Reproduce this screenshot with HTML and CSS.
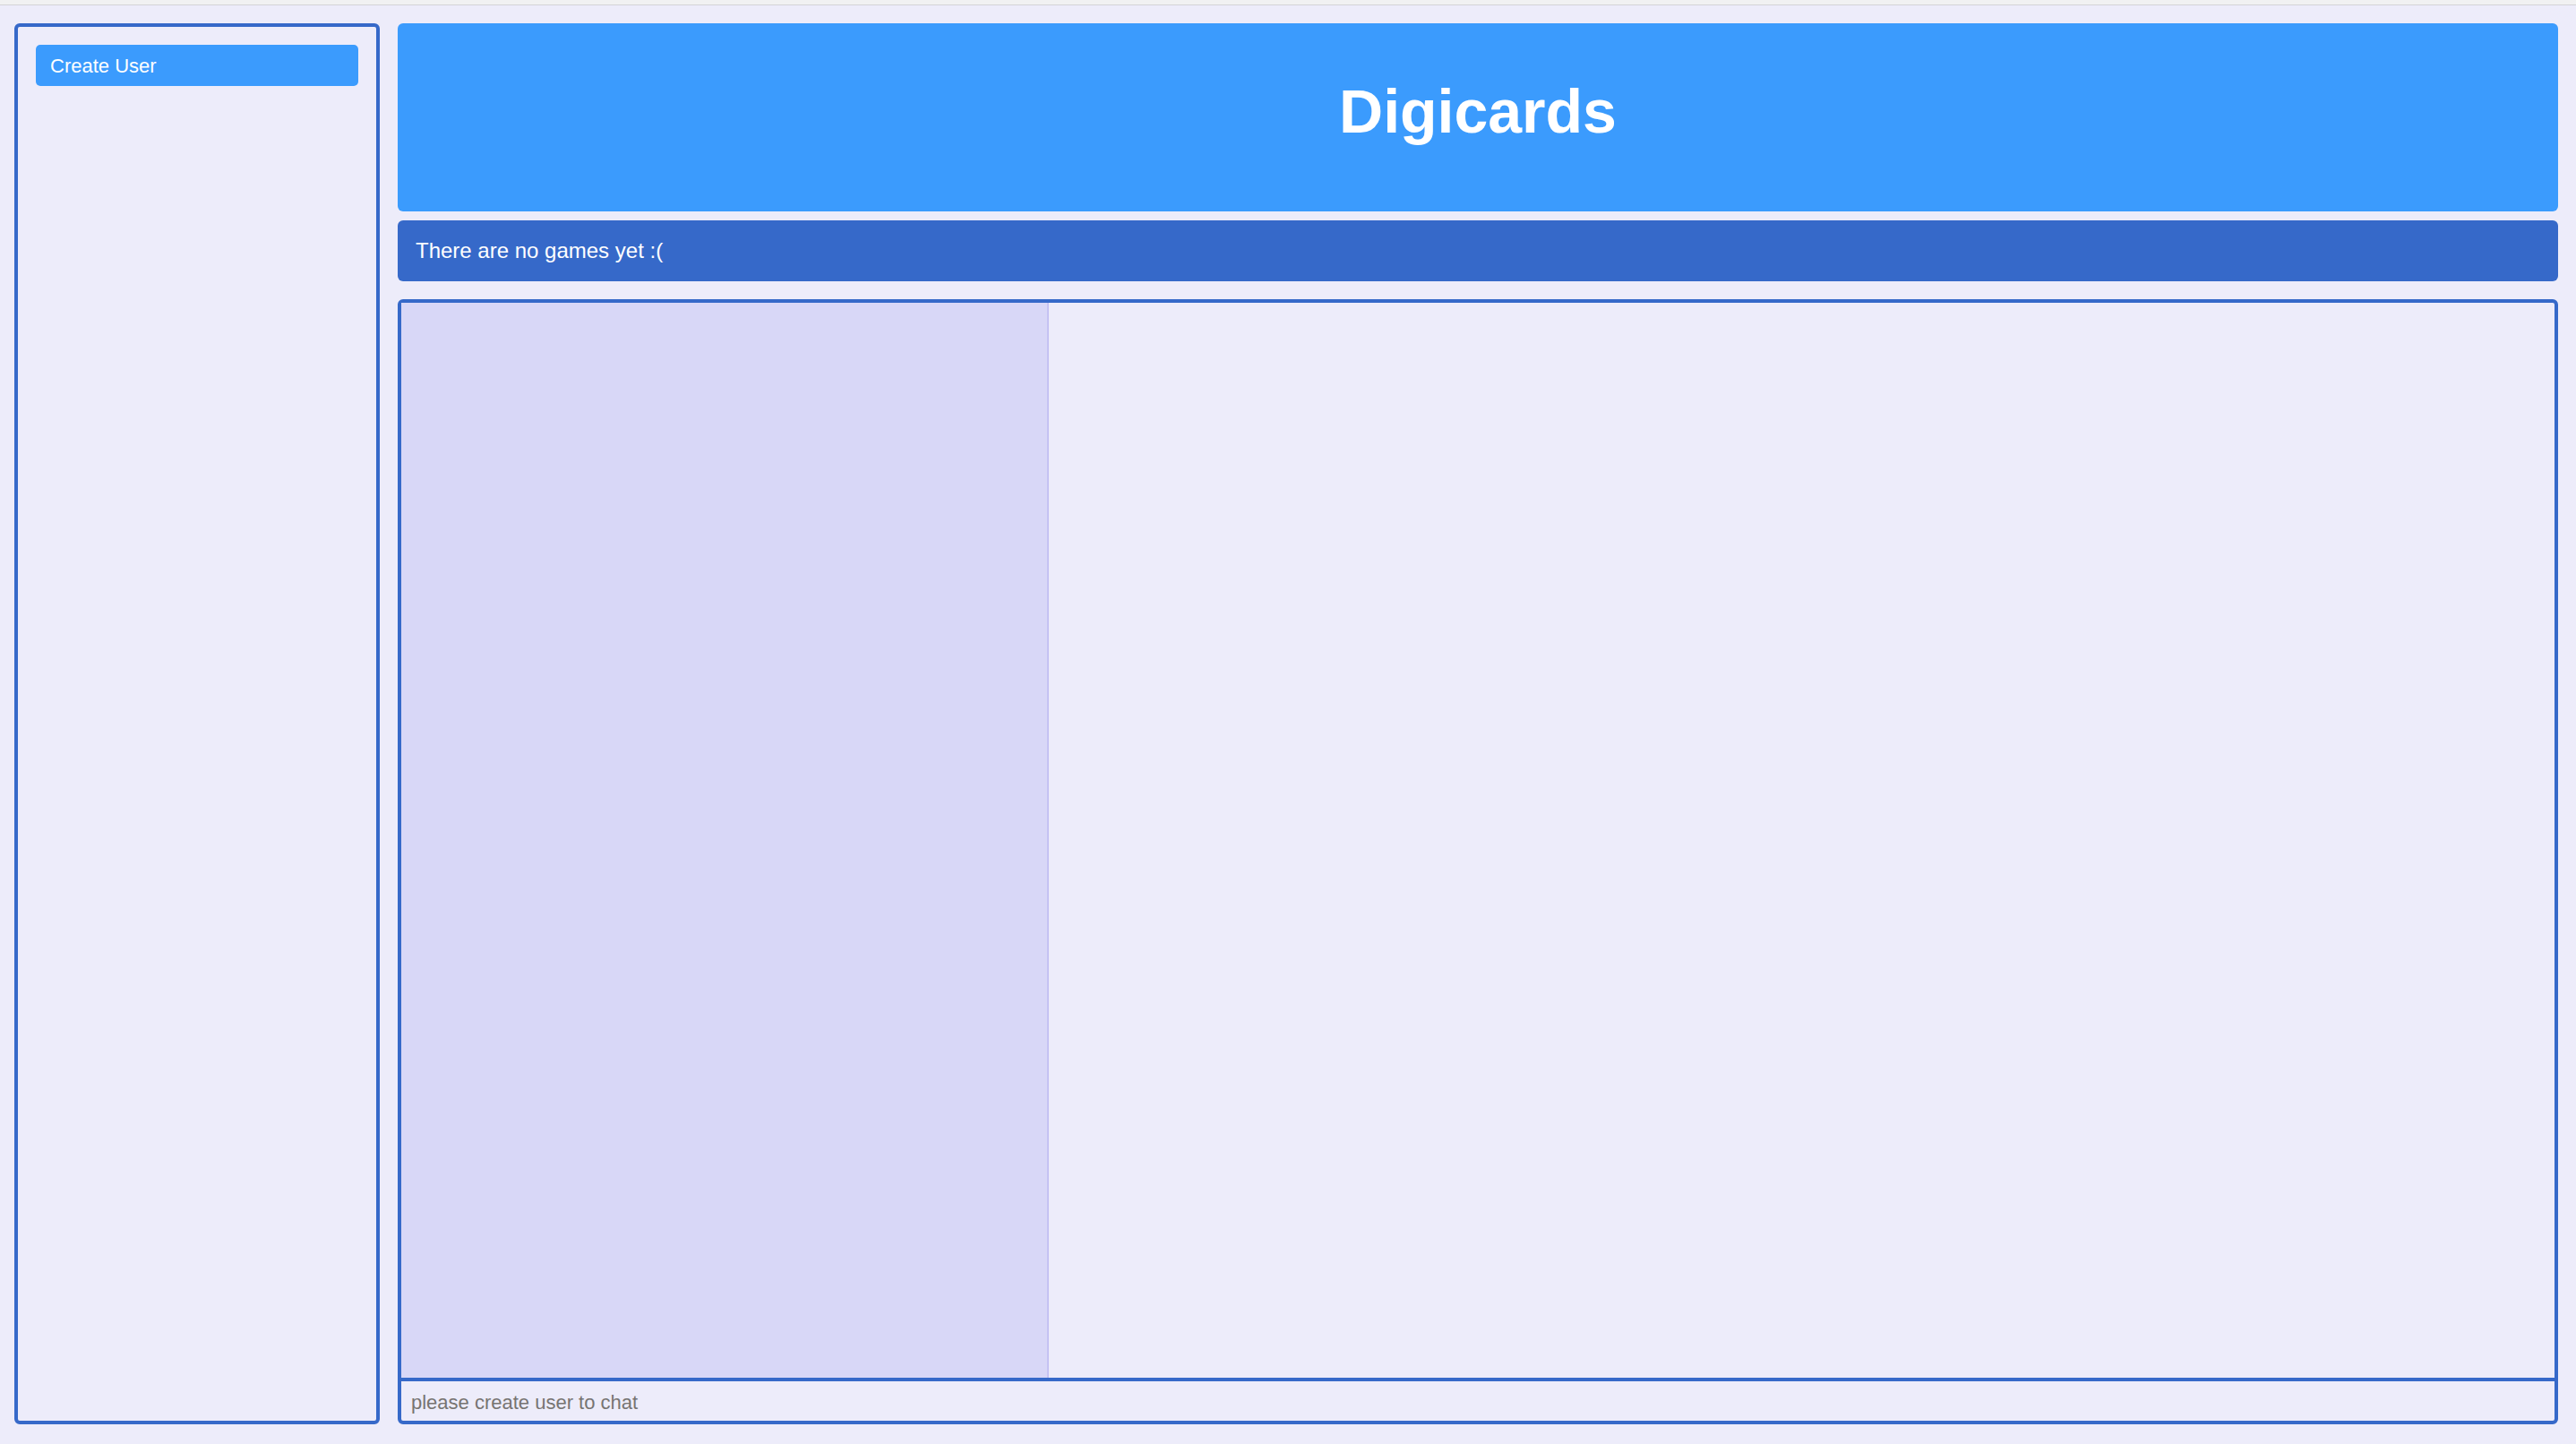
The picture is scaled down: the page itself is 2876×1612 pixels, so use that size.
FILE: index.html
```html
<!DOCTYPE html>
<html>
<head>
<meta charset="utf-8">
<title>Digicards</title>
<link rel="stylesheet" href="styles.css">
</head>
<body>
<div class="topstrip"></div>
<div class="app">
  <aside class="sidebar">
    <button class="create-btn">Create User</button>
  </aside>
  <section class="main">
    <header class="header"><h1 class="title">Digicards</h1></header>
    <div class="games-bar">There are no games yet :(</div>
    <div class="chat">
      <div class="chat-body">
        <div class="users-col"></div>
        <div class="messages"></div>
      </div>
      <div class="chat-input">please create user to chat</div>
    </div>
  </section>
</div>
</body>
</html>
```

FILE: styles.css
```css
* { box-sizing: border-box; }
html, body {
  margin: 0;
  padding: 0;
  height: 100%;
}
body {
  background: #edecfa;
  font-family: "Liberation Sans", Arial, sans-serif;
  display: flex;
  flex-direction: column;
}
.topstrip {
  height: 6px;
  background: #f1f1f2;
  border-bottom: 1px solid #d3d3d6;
  flex: none;
}
.app {
  flex: 1;
  display: flex;
  gap: 20px;
  padding: 20px 20px 22px 16px;
  min-height: 0;
}
.sidebar {
  width: 408px;
  flex: none;
  border: 4px solid #3669c9;
  border-radius: 6px;
  padding: 20px 20px;
}
.create-btn {
  display: flex;
  align-items: center;
  width: 360px;
  height: 46px;
  background: #3b9bfd;
  color: #fff;
  border: none;
  border-radius: 5px;
  padding: 1px 16px 0;
  font-family: "Liberation Sans", Arial, sans-serif;
  font-size: 22px;
  text-align: left;
}
.main {
  flex: 1;
  display: flex;
  flex-direction: column;
  min-width: 0;
}
.header {
  height: 210px;
  flex: none;
  background: #3b9bfd;
  border-radius: 6px;
  display: flex;
  align-items: center;
  justify-content: center;
  padding-bottom: 14px;
}
.title {
  margin: 0;
  color: #fff;
  font-size: 68px;
  font-weight: bold;
}
.games-bar {
  margin-top: 10px;
  height: 68px;
  flex: none;
  background: #3669c9;
  border-radius: 6px;
  color: #fff;
  font-size: 24px;
  display: flex;
  align-items: center;
  padding: 0 20px;
}
.chat {
  margin-top: 20px;
  flex: 1;
  border: 4px solid #3669c9;
  border-radius: 6px;
  display: flex;
  flex-direction: column;
  min-height: 0;
}
.chat-body {
  flex: 1;
  display: flex;
}
.users-col {
  box-sizing: content-box;
  width: 30%;
  background: #d8d7f7;
  border-right: 2px solid #c5c2f3;
}
.messages {
  flex: 1;
}
.chat-input {
  height: 48px;
  flex: none;
  border-top: 4px solid #3669c9;
  color: #777472;
  font-size: 22px;
  display: flex;
  align-items: center;
  padding: 4px 11px 0;
}
```
